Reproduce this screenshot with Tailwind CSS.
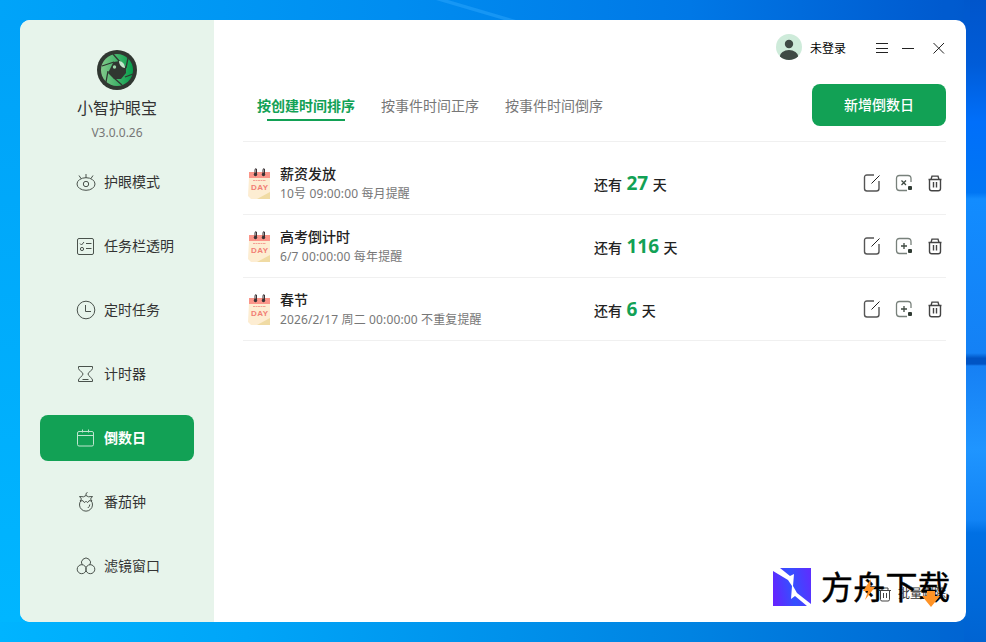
<!DOCTYPE html>
<html lang="zh-CN">
  <head>
    <meta charset="UTF-8" />
    <meta name="viewport" content="width=device-width, initial-scale=1.0" />
    <title>小智护眼宝</title>
    <script src="https://cdn.jsdelivr.net/npm/@tailwindcss/browser@4"></script>
  </head>
  <body class="relative w-[986px] h-[642px] p-5 overflow-hidden bg-[#0078e8] font-['Noto_Sans','Noto_Sans_CJK_SC',sans-serif] text-[#333]">
    <!-- Desktop wallpaper -->
    <svg class="absolute inset-0" width="986" height="642" viewBox="0 0 986 642">
      <defs>
        <linearGradient id="top" x1="0" x2="1" y1="0" y2="0">
          <stop offset="0" stop-color="#00a4f9" /><stop offset=".4" stop-color="#008df0" /><stop offset=".7" stop-color="#0078e6" /><stop offset="1" stop-color="#0055cb" />
        </linearGradient>
        <linearGradient id="bottom" x1="0" x2="1" y1="0" y2="0">
          <stop offset="0" stop-color="#00b4ff" /><stop offset=".25" stop-color="#00a5f8" /><stop offset=".7" stop-color="#0083e2" /><stop offset="1" stop-color="#0065d2" />
        </linearGradient>
        <linearGradient id="left" x1="0" x2="0" y1="0" y2="1">
          <stop offset="0" stop-color="#00a2f8" /><stop offset="1" stop-color="#00b6ff" />
        </linearGradient>
        <linearGradient id="right" x1="0" x2="0" y1="0" y2="1">
          <stop offset="0" stop-color="#0055cb" /><stop offset=".1" stop-color="#005cd8" /><stop offset=".19" stop-color="#006ffa" /><stop offset=".3" stop-color="#0076f4" /><stop offset=".31" stop-color="#128cff" /><stop offset=".55" stop-color="#1481f5" /><stop offset=".558" stop-color="#0054c4" /><stop offset=".567" stop-color="#0054c4" /><stop offset=".57" stop-color="#1680f4" /><stop offset=".7" stop-color="#1f95ff" /><stop offset=".81" stop-color="#1183f5" /><stop offset=".83" stop-color="#0070e4" /><stop offset="1" stop-color="#0064d2" />
        </linearGradient>
      </defs>
      <path d="M0 0h986v321H0z" fill="url(#top)" />
      <path d="M0 321h986v321H0z" fill="url(#bottom)" />
      <path d="M0 20h40v602H0z" fill="url(#left)" />
      <path d="M964 0h22v642h-22z" fill="url(#right)" />
      <path d="M940 0h30v24h-30zM940 618h30v24h-30z" fill="#0060d2" opacity=".3" />
      <path d="M436 0h12l68 20h-12z" fill="#2ca6fb" opacity=".5" />
    </svg>

    <div class="relative flex w-[946px] h-[602px] rounded-[10px] overflow-hidden bg-white">
      <!-- Sidebar -->
      <aside class="w-[194px] shrink-0 bg-[#e7f4eb] px-5 pt-[30px] flex flex-col items-center">
        <svg class="w-10 h-10 shrink-0" viewBox="0 0 40 40">
          <defs>
            <linearGradient id="iris" x1="0" x2="1"><stop offset="0" stop-color="#82c98a" /><stop offset="1" stop-color="#049e4b" /></linearGradient>
          </defs>
          <circle cx="20" cy="20" r="20" fill="#303731" />
          <circle cx="20" cy="20" r="16" fill="url(#iris)" />
          <path d="M16 4l7 8M31 8l-2 10M36 24l-8 3M25 35l-8-7M9 32l2-11M5 16l12-4" fill="none" stroke="#303731" stroke-width="1.300" />
          <path d="M16.500 12L23 11l6 6v6l-5 6h-7l-6-6z" fill="#303731" />
          <circle cx="17.500" cy="17" r="1.700" fill="#9ed8aa" />
          <path d="M22 11c3 0 6 3 6 7-3 0-6-3-6-7z" fill="#c3e7cb" />
        </svg>
        <h1 class="mt-[6px] text-base leading-6">小智护眼宝</h1>
        <p class="mt-1 text-xs leading-[18px] text-[#777]">V3.0.0.26</p>
        <nav class="mt-[17px] flex flex-col gap-[18px] w-[154px] text-sm">
          <a class="flex items-center gap-2 h-[46px] pl-9 rounded-lg">
            <svg class="w-5 h-5" viewBox="0 0 20 20" fill="none" stroke="#4a524c"><ellipse cx="10" cy="12" rx="9" ry="6.300" /><circle cx="10" cy="12" r="2.700" /><path d="M10 2v4M3 3.500l2 3M17 3.500l-2 3" /></svg>
            <span>护眼模式</span>
          </a>
          <a class="flex items-center gap-2 h-[46px] pl-9 rounded-lg">
            <svg class="w-5 h-5" viewBox="0 0 20 20" fill="none" stroke="#4a524c"><rect x="1.500" y="2.500" width="16" height="16" rx="1.500" /><path d="M4 7.500l1.500 1.500L8 6M10 7.500h5.500M10 12.500h5.500" /><circle cx="6" cy="13" r="1.600" /></svg>
            <span>任务栏透明</span>
          </a>
          <a class="flex items-center gap-2 h-[46px] pl-9 rounded-lg">
            <svg class="w-5 h-5" viewBox="0 0 20 20" fill="none" stroke="#4a524c"><circle cx="10" cy="10" r="8.800" /><path d="M9.500 5v6.500H15" /></svg>
            <span>定时任务</span>
          </a>
          <a class="flex items-center gap-2 h-[46px] pl-9 rounded-lg">
            <svg class="w-5 h-5" viewBox="0 0 20 20" fill="none" stroke="#4a524c"><path d="M2.500 2.500h14v2c0 2-4.500 3.500-4.500 5.500s4.500 4 4.500 6v1.500h-14V16c0-2 4.500-4 4.500-6S2.500 6.500 2.500 4.500zM6.500 15.500h6" /></svg>
            <span>计时器</span>
          </a>
          <a class="flex items-center gap-2 h-[46px] pl-9 rounded-lg bg-[#12a155] text-white font-bold">
            <svg class="w-5 h-5" viewBox="0 0 20 20" fill="none" stroke="#bfe5cf"><rect x="1.500" y="3.500" width="16" height="14.500" rx="1.500" /><path d="M1.500 7.500h16M6.500 1.500v3M12.500 1.500v3" /></svg>
            <span>倒数日</span>
          </a>
          <a class="flex items-center gap-2 h-[46px] pl-9 rounded-lg">
            <svg class="w-5 h-5" viewBox="0 0 20 20" fill="none" stroke="#4a524c"><path d="M5 8.500a6.500 6.500 0 1 0 10 0M3.500 4.500l4 .3L10 3.500l2.500 1.300 4-.3-2 2.500 1.500 2-3-.3-1.500 2L10 9.200l-1.500 1.500-1.500-2-3 .3L5.500 7zM10 3.500V1.500L11.500.5M13.800 12.500q0 2-2 3.500" /></svg>
            <span>番茄钟</span>
          </a>
          <a class="flex items-center gap-2 h-[46px] pl-9 rounded-lg">
            <svg class="w-5 h-5" viewBox="0 0 20 20" fill="none" stroke="#4a524c"><path d="M6.200 9a4.500 4.500 0 1 1 7.600 0" /><circle cx="5.700" cy="13.200" r="4.500" /><circle cx="14.300" cy="13.200" r="4.500" /></svg>
            <span>滤镜窗口</span>
          </a>
        </nav>
      </aside>

      <main class="flex-1 flex flex-col pl-[29px] pr-5">
        <!-- Title bar -->
        <header class="flex items-center justify-end h-[56px] pt-[1px] -mr-px">
          <svg class="w-[26px] h-[26px] -mt-[4px]" viewBox="0 0 26 26">
            <clipPath id="face"><circle cx="13" cy="13" r="13" /></clipPath>
            <g clip-path="url(#face)"><path d="M0 0h26v26H0z" fill="#ceebda" /><circle cx="13" cy="10" r="4.200" fill="#3f4a45" /><ellipse cx="13" cy="22.500" rx="9.200" ry="6.500" fill="#3f4a45" /></g>
          </svg>
          <span class="ml-2 mt-px text-xs text-black">未登录</span>
          <svg class="-mt-px ml-[29px] w-[72px] h-3" viewBox="0 0 72 12" fill="none" stroke="#222"><path d="M1 1.500h12M1 6.500h12M1 10.500h12M27 6.500h12" /><path d="M58.500 1l10.500 10.500M69 1L58.500 11.500" /></svg>
        </header>

        <div class="flex justify-between h-[66px] pt-2 border-b border-[#f0f0f0]">
          <div class="flex gap-[26px] pl-[14px] pt-[11px] text-sm leading-[22px] text-[#777]">
            <div class="flex flex-col items-center font-bold text-[#12a155]">按创建时间排序<span class="mt-[2px] w-[78px] h-[2px] bg-[#12a155]"></span></div>
            <div>按事件时间正序</div>
            <div>按事件时间倒序</div>
          </div>
          <button class="w-[134px] h-[42px] rounded-lg bg-[#12a155] text-white text-sm font-medium">新增倒数日</button>
        </div>

        <!-- Countdown list -->
        <ul id="list" class="pt-[10px]"></ul>
      </main>
    </div>

    <!-- Batch delete and the site mark over it -->
    <div class="absolute left-[879px] top-[585px] flex items-center gap-[7px] text-xs leading-[18px]">
      <svg class="w-3 h-4" viewBox="0 0 12 16" fill="none" stroke="#444"><path d="M0 4.500h12M3 4V2h6v2M1.500 4.500v9q0 1.500 1.500 1.500h6q1.500 0 1.500-1.500v-9M4.500 7v5M7.500 7v5" /></svg>
      <span>批量删除</span>
    </div>
    <div class="absolute left-[773px] top-[564px] flex items-center gap-[10px]">
      <svg class="w-[38px] h-[38px]" viewBox="0 0 38 38">
        <defs><linearGradient id="ark" x1="0" y1=".6" x2="1" y2=".4"><stop offset="0" stop-color="#6425ff" /><stop offset=".5" stop-color="#3450ff" /><stop offset="1" stop-color="#5b30ff" /></linearGradient></defs>
        <path d="M0 0h38v38H0z" fill="url(#ark)" />
        <path d="M0 0h7l10 8 4-2-1 12 4 7 14 11v2h-4L22 28l-4 3 1-13-4-6L0 3z" fill="#fff" />
      </svg>
      <span class="text-[32px] leading-[46px] tracking-[.3px] text-black [-webkit-text-stroke:.5px_black]">方舟下载</span>
    </div>
    <svg class="absolute left-[860px] top-[578px]" width="84" height="30" viewBox="0 0 84 30" fill="#ff9326"><path d="M11 1L3 13h5L5 22l10-13H10zM67 13h8v5h5L71 29 62 18h5z" /></svg>

    <script>
      const items = [
        { title: '薪资发放', time: '10号 09:00:00 每月提醒', days: 27, pin: 'M6.500 6.500l4.500 4.500M11 6.500l-4.500 4.500' },
        { title: '高考倒计时', time: '6/7 00:00:00 每年提醒', days: 116, pin: 'M9 6v6M6 9h6' },
        { title: '春节', time: '2026/2/17 周二 00:00:00 不重复提醒', days: 6, pin: 'M9 6v6M6 9h6' }
      ];

      document.getElementById('list').innerHTML = items.map(item => `
        <li class="flex items-center h-[63px] pl-[5px] pr-[2px] border-b border-[#f0f0f0]">
          <svg class="w-6 h-8 mt-px" viewBox="0 0 24 32">
            <path d="M1 9h21v22H3L0 28z" fill="#fdedd2" />
            <path d="M22 24v7H9z" fill="#f0dba4" />
            <path d="M1 4h21v6H1z" fill="#fb9589" />
            <path d="M5 12.500h13" stroke="#f5a194" stroke-dasharray="2 .5" />
            <path d="M7 7V2q0-2 1.500-1v6M15 7V2q0-2 1.500-1v6" fill="none" stroke="#3a3234" />
            <circle cx="7.500" cy="6.500" r="1.700" fill="#3a3234" /><circle cx="15.500" cy="6.500" r="1.700" fill="#3a3234" />
            <text x="11.500" y="22" text-anchor="middle" textLength="17" font-family="Liberation Sans" font-size="8" font-weight="bold" fill="#f17f75">DAY</text>
          </svg>
          <div class="w-[314px] pl-2 pt-px">
            <p class="text-sm leading-[21px] font-medium text-[#222]">${item.title}</p>
            <p class="text-xs leading-5 tracking-[.14px] text-[#777]">${item.time}</p>
          </div>
          <p class="flex-1 pl-2 text-sm font-medium [word-spacing:.8px] text-[#222]">还有 <b class="text-[19px] leading-6 text-[#12a155]">${item.days}</b> 天</p>
          <div class="flex items-center gap-[14px] mr-px">
            <svg class="w-[18px] h-[18px]" viewBox="0 0 18 18" fill="none" stroke="#555" stroke-width="1.400"><path d="M11 1H4Q1.500 1 1.500 3.500v11Q1.500 17 4 17h9.500q2.500 0 2.500-2.500V7" /><path d="M8.500 9.500L16.500 1.500" stroke="#222" stroke-width="1" /></svg>
            <svg class="w-[18px] h-[18px]" viewBox="0 0 18 18" fill="none" stroke="#78817b" stroke-width="1.300"><path d="M16 8V4.500Q16 1.500 13 1.500H4.500Q1.500 1.500 1.500 4.500v9q0 3 3 3H12" /><path d="${item.pin}" stroke="#3f4a42" /><rect x="13" y="12" width="4" height="4" rx="1" fill="#303b33" stroke="none" /></svg>
            <svg class="w-4 h-[18px]" viewBox="0 0 16 18" fill="none" stroke="#444" stroke-width="1.400"><path d="M1.500 5.500h13M4 5.500l1-3.400h6l1 3.400M2.500 5.500v9q0 2.300 2.300 2.300h6.400q2.300 0 2.300-2.300v-9M6.500 8v5.500M9.500 8v5.500" /></svg>
          </div>
        </li>`).join('');
    </script>
  </body>
</html>
